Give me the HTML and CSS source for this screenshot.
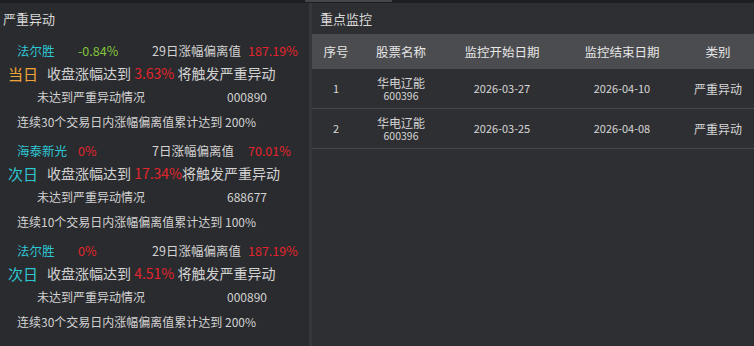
FILE: index.html
```html
<!DOCTYPE html>
<html>
<head>
  <title>异动监控</title>
  <link rel="stylesheet" href="styles.css">
</head>
<body>
  <div class="topbar"><span class="tab"></span></div>
  <div class="page">
    <div class="panel left">
      <div class="title">严重异动</div>

      <div class="block">
        <div class="stock">
          <span class="name">法尔胜</span>
          <span class="green">-0.84%</span>
          <span>29日涨幅偏离值</span>
          <span class="red">187.19%</span>
        </div>
        <div class="trigger">
          <span class="day orange">当日</span>
          <span>收盘涨幅达到 <em class="red">3.63%</em> 将触发严重异动</span>
        </div>
        <div class="status">
          <span>未达到严重异动情况</span>
          <span>000890</span>
        </div>
        <div class="rule">连续30个交易日内涨幅偏离值累计达到 200%</div>
      </div>

      <div class="block">
        <div class="stock">
          <span class="name">海泰新光</span>
          <span class="red">0%</span>
          <span>7日涨幅偏离值</span>
          <span class="red">70.01%</span>
        </div>
        <div class="trigger">
          <span class="day cyan">次日</span>
          <span>收盘涨幅达到 <em class="red">17.34%</em>将触发严重异动</span>
        </div>
        <div class="status">
          <span>未达到严重异动情况</span>
          <span>688677</span>
        </div>
        <div class="rule">连续10个交易日内涨幅偏离值累计达到 100%</div>
      </div>

      <div class="block">
        <div class="stock">
          <span class="name">法尔胜</span>
          <span class="red">0%</span>
          <span>29日涨幅偏离值</span>
          <span class="red">187.19%</span>
        </div>
        <div class="trigger">
          <span class="day cyan">次日</span>
          <span>收盘涨幅达到 <em class="red">4.51%</em> 将触发严重异动</span>
        </div>
        <div class="status">
          <span>未达到严重异动情况</span>
          <span>000890</span>
        </div>
        <div class="rule">连续30个交易日内涨幅偏离值累计达到 200%</div>
      </div>
    </div>

    <div class="panel right">
      <div class="title">重点监控</div>
      <table class="watch">
        <thead>
          <tr>
            <th class="c1">序号</th>
            <th class="c2">股票名称</th>
            <th class="c3">监控开始日期</th>
            <th class="c4">监控结束日期</th>
            <th class="c5">类别</th>
          </tr>
        </thead>
        <tbody>
          <tr>
            <td>1</td>
            <td class="stk"><span>华电辽能</span><span class="code">600396</span></td>
            <td>2026-03-27</td>
            <td>2026-04-10</td>
            <td class="kind">严重异动</td>
          </tr>
          <tr>
            <td>2</td>
            <td class="stk"><span>华电辽能</span><span class="code">600396</span></td>
            <td>2026-03-25</td>
            <td>2026-04-08</td>
            <td class="kind">严重异动</td>
          </tr>
        </tbody>
      </table>
    </div>
  </div>
</body>
</html>
```

FILE: styles.css
```css
body {
  margin: 0;
  padding: 0;
  background: #2e2f32;
  color: #d2d2d2;
  font-family: "Noto Sans CJK SC", "Noto Sans", sans-serif;
  font-size: 13px;
  width: 754px;
  height: 346px;
  overflow: hidden;
}

.topbar {
  height: 3px;
  background: #1d1e21;
}

.tab {
  display: block;
  margin-left: 305px;
  width: 87px;
  height: 2px;
  background: #45464a;
}

.page {
  display: flex;
  height: 343px;
}

.panel {
  box-sizing: border-box;
}

.left {
  width: 312px;
  flex-shrink: 0;
  background: #2a2b2e;
  border-right: 3px solid #36373a;
}

.right {
  flex: 1;
  background: #2e2f32;
}

.title {
  height: 31px;
  line-height: 31px;
  font-size: 13px;
  color: #d8d8d8;
  padding-left: 3px;
}

.right .title {
  padding-left: 8px;
}

/* stock blocks */
.block {
  height: 100px;
  padding-top: 6px;
  box-sizing: border-box;
}

.stock {
  display: grid;
  grid-template-columns: 61px 74px 96px auto;
  padding-left: 17px;
  height: 21px;
  line-height: 21px;
  font-size: 12.5px;
}

.trigger {
  display: flex;
  align-items: center;
  padding-left: 8px;
  height: 24px;
  font-size: 14px;
}

.trigger em {
  font-style: normal;
}

.day {
  width: 39px;
  font-size: 15px;
}

.status {
  display: grid;
  grid-template-columns: 190px auto;
  padding-left: 37px;
  height: 24px;
  line-height: 24px;
  font-size: 12px;
}

.rule {
  padding-left: 17px;
  height: 25px;
  line-height: 25px;
  font-size: 12px;
}

.name {
  color: #2fc6d3;
}

.cyan {
  color: #2fc6d3;
}

.orange {
  color: #f0a43a;
}

.green {
  color: #84c43c;
}

.red {
  color: #e2252d;
}

/* watch table */
.watch {
  border-collapse: collapse;
  width: 442px;
  table-layout: fixed;
  text-align: center;
}

.watch th {
  background: #4b4c4f;
  height: 35px;
  font-weight: normal;
  font-size: 12.5px;
  color: #e6e6e6;
  padding: 0;
}

.c1 { width: 48px; }
.c2 { width: 82px; }
.c3 { width: 120px; }
.c4 { width: 120px; }

.watch td {
  height: 39px;
  border-bottom: 1px solid #46474a;
  font-size: 11px;
  color: #d6d6d6;
  padding: 0;
  line-height: 13px;
}

.watch td.stk span {
  display: block;
  font-size: 12px;
  line-height: 13px;
}

.watch td.stk .code {
  font-size: 10.5px;
  line-height: 13px;
}

.watch td.kind {
  font-size: 12px;
}
```
